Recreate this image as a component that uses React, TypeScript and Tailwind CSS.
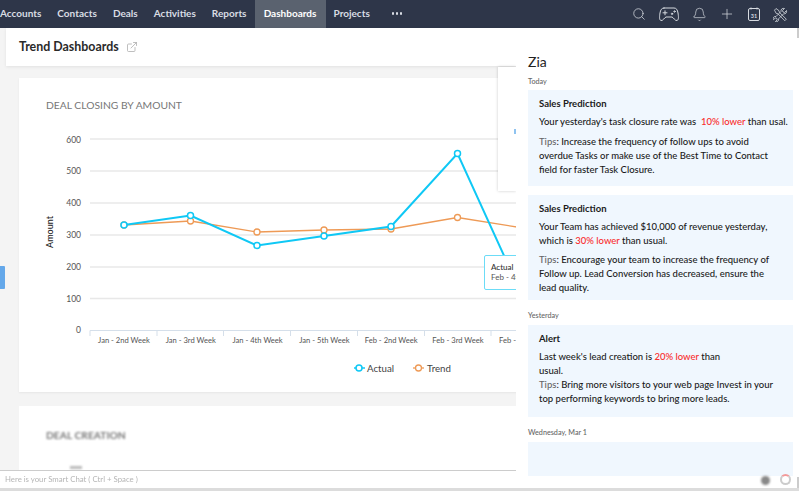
import React from "react";
import { Search, Bell, Plus, ExternalLink } from "lucide-react";

const nav = ["Accounts", "Contacts", "Deals", "Activities", "Reports", "Dashboards", "Projects"];
const xs = [124, 190.5, 257, 324, 391, 457.5];
const actual = [225, 215.5, 245.5, 236, 226.5, 153.5];
const trend = [225, 221, 232, 230, 229, 217.5];
const grid = [139, 171, 203, 235, 267, 298.5];
const labels = ["600", "500", "400", "300", "200", "100", "0"];
const ticks = ["Jan - 2nd Week", "Jan - 3rd Week", "Jan - 4th Week", "Jan - 5th Week", "Feb - 2nd Week", "Feb - 3rd Week", "Feb - 4th Week"];
const pts = (a: number[]) => a.map((y, i) => `${xs[i]},${y}`).join(" ");

function Chart() {
  return (
    <svg width="520" height="281" viewBox="0 111 520 281" className="block">
      {grid.map((y) => (
        <line key={y} x1="90" x2="520" y1={y} y2={y} stroke="#e8e8e8" strokeWidth="1.3" />
      ))}
      {labels.map((l, i) => (
        <text key={l} x="81" y={142.5 + i * 31.8} textAnchor="end" fontSize="8.5" fill="#555">{l}</text>
      ))}
      <text transform="translate(52.5,232) rotate(-90)" textAnchor="middle" fontSize="9" fontWeight="500" fill="#222">Amount</text>
      <line x1="90" x2="520" y1="330.5" y2="330.5" stroke="#d5dfea" />
      {[90, 157, 223.5, 290.5, 357.5, 424.5, 491].map((x) => (
        <line key={x} x1={x} x2={x} y1="330.5" y2="336" stroke="#d5dfea" />
      ))}
      {ticks.map((t, i) => (
        <text key={t} x={124 + i * 66.8} y="343" textAnchor="middle" fontSize="7.6" fill="#555">{t}</text>
      ))}
      <polyline points={pts(trend) + " 520,227.5"} fill="none" stroke="#ee9a56" strokeWidth="1.3" />
      {trend.map((y, i) => (
        <circle key={i} cx={xs[i]} cy={y} r="3" fill="#fff" stroke="#ee9a56" strokeWidth="1.3" />
      ))}
      <polyline points={pts(actual) + " 506,260"} fill="none" stroke="#0fc8f5" strokeWidth="2" />
      {actual.map((y, i) => (
        <circle key={i} cx={xs[i]} cy={y} r="3" fill="#fff" stroke="#0fc8f5" strokeWidth="1.5" />
      ))}
      <line x1="354" x2="365" y1="368" y2="368" stroke="#0fc8f5" strokeWidth="1.5" />
      <circle cx="359" cy="368" r="3" fill="#fff" stroke="#0fc8f5" strokeWidth="1.5" />
      <text x="367" y="371.5" fontSize="9.7" fill="#444">Actual</text>
      <line x1="413" x2="424" y1="368" y2="368" stroke="#ee9a56" strokeWidth="1.3" />
      <circle cx="418.5" cy="368" r="3" fill="#fff" stroke="#ee9a56" strokeWidth="1.3" />
      <text x="427" y="371.5" fontSize="9.7" fill="#444">Trend</text>
    </svg>
  );
}

function Red({ children }: { children: React.ReactNode }) {
  return <span className="text-[#f92c2c]">{children}</span>;
}
function Tips() {
  return <span className="text-[#666]">Tips</span>;
}
function Card({ title, className, children }: { title: string; className?: string; children: React.ReactNode }) {
  return (
    <div className={`bg-[#f0f7fe] pl-[11px] pt-[7px] whitespace-nowrap ${className ?? ""}`}>
      <div className="font-bold text-[#1c1c1c] h-[18px] leading-[14px]">{title}</div>
      {children}
    </div>
  );
}

export default function App() {
  return (
    <div className="relative w-[799px] h-[491px] overflow-hidden bg-[#f4f4f4] flex flex-col text-[#111]" style={{ fontFamily: '"Lato","Liberation Sans",sans-serif' }}>
      <header className="h-[28px] shrink-0 bg-[#2e3649] flex items-stretch text-[10px] font-bold text-[#d9dde4]">
        {nav.map((n, i) => (
          <div key={n} className={`flex items-center pb-[1px] ${i === 0 ? "pr-2" : "px-2"} ${n === "Dashboards" ? "w-[71px] justify-center bg-[#5a626f] text-white" : ""}`}>{n}</div>
        ))}
        <div className="flex items-center pl-[14px] gap-[1.5px] pb-[1px]">
          <span className="w-[2.5px] h-[2.5px] rounded-full bg-[#d9dde4]" />
          <span className="w-[2.5px] h-[2.5px] rounded-full bg-[#d9dde4]" />
          <span className="w-[2.5px] h-[2.5px] rounded-full bg-[#d9dde4]" />
        </div>
        <div className="ml-auto flex items-center gap-[12px] pr-[11px] text-[#d6dae0]">
          <Search size={14} strokeWidth={1.3} />
          <svg width="22" height="16" viewBox="0 0 22 16" fill="none" stroke="currentColor" strokeWidth="1" strokeLinejoin="round" strokeLinecap="round">
            <path d="M6 2h10c2.500 0 3.500 2 4 5s1 7-1 7.500c-2 .5-3.500-3-5-3.500H8c-1.500.5-3 4-5 3.500S1.500 10 2 7s1.500-5 4-5z" />
            <path d="M5 6.800h4M7 4.800v4" />
            <circle cx="14" cy="7.800" r=".7" />
            <circle cx="16.500" cy="5.500" r=".7" />
          </svg>
          <Bell size={15} strokeWidth={1.1} />
          <Plus size={16} strokeWidth={1.1} />
          <svg width="14" height="15" viewBox="0 0 14 15" fill="none" stroke="currentColor" strokeWidth="1">
            <rect x="1.500" y="1.500" width="11" height="12" rx="1.500" />
            <path d="M4 .5v2M10 .5v2" />
            <text x="7" y="10.500" textAnchor="middle" fontSize="5.500" fontWeight="700" fill="currentColor" stroke="none">31</text>
          </svg>
          <svg width="15" height="15" viewBox="0 0 15 15" fill="none" stroke="currentColor" strokeWidth="0.8" strokeLinejoin="round">
            <path d="M1.500 3.200 3 1.500l3 2.200.3 1.500 7 7-1.500 1.500-7-7-1.600-.3z" />
            <path d="M13.500 3.500l-2 2-1.500-.5-.5-1.500 2-2c-2-.7-4 .8-3.500 3L3 9.500c-2-.5-3.500 1.500-2.500 3.200l1.800-1.700 1.500.4.400 1.400-1.800 1.800c2 .7 3.700-1 3.200-2.800l5-5c2 .5 3.500-1.300 2.900-3.300z" />
          </svg>
        </div>
      </header>

      <div className="flex-1 min-h-0 pl-[6px] flex flex-col">
        <div className="h-[38px] shrink-0 bg-white flex items-center gap-[7px] pl-[13px] shadow-[0_1px_3px_rgba(0,0,0,0.08)]">
          <span className="text-[12.4px] font-bold text-[#2a2a2a]">Trend Dashboards</span>
          <ExternalLink size={12} strokeWidth={1.5} className="text-[#aaa]" />
        </div>
        <div className="flex-1 min-h-0 pl-[13px] pt-[12px] flex flex-col gap-[14px]">
          <div className="h-[314px] shrink-0 bg-white shadow-[0_1px_2px_rgba(0,0,0,0.06)] overflow-hidden">
            <div className="pl-[27px] pt-[21px] h-[33px] text-[10.3px] leading-[12px] text-[#777]">DEAL CLOSING BY AMOUNT</div>
            <div className="-ml-[19px]"><Chart /></div>
          </div>
          <div className="flex-1 bg-white pl-[27px] pt-[23px]">
            <div className="text-[10.3px] leading-[13px] font-bold text-[#777] blur-[1px]">DEAL CREATION</div>
            <div className="ml-[24px] mt-[24px] w-[12px] h-[3px] bg-[#bbb] blur-[1px]" />
          </div>
        </div>
      </div>

      <div className="absolute left-0 top-[266px] w-[5px] h-[23px] rounded-r-[1px] bg-[#64a8ea]" />

      <div className="absolute left-[498px] top-[67px] w-[18px] h-[124px] bg-white shadow-[0_0_3px_rgba(0,0,0,0.2)]">
        <div className="absolute right-0 top-[62px] w-[2px] h-[5px] bg-[#8fc3f0]" />
      </div>

      <div className="absolute left-[484px] top-[255px] w-[40px] h-[35px] bg-white border-[1.5px] border-[#6cdcf7] rounded-[2px] pl-[6px] pt-[6px] text-[8px] leading-[10px] text-[#333] whitespace-nowrap overflow-hidden">
        <div className="font-medium">Actual</div>
        <div className="text-[#555]">Feb - 4th Week</div>
      </div>

      <div className="absolute left-0 right-0 bottom-0 h-[21px] bg-[#dcdcdc] pb-[3px]">
        <div className="h-full bg-white border-t border-[#ccc] pl-[5px] flex items-center text-[7.8px] text-[#b5b5b5]">
          <span className="blur-[0.6px]">Here is your Smart Chat ( Ctrl + Space )</span>
        </div>
      </div>

      <aside className="absolute left-[516px] top-[28px] right-0 bottom-[3px] bg-white pl-[12px] pr-[6px] text-[9.5px] leading-[14px] font-medium text-[#1a1a1a]">
        <div className="text-[14px] leading-[20px] mt-[24px] font-normal text-[#222]">Zia</div>
        <div className="text-[7.2px] leading-[10px] mt-[5px] mb-[3px] text-[#666] font-medium">Today</div>
        <div className="flex flex-col">
          <Card title="Sales Prediction" className="h-[96px] mb-[9px]">
            <div>Your yesterday's task closure rate was&nbsp; <Red>10% lower</Red> than usal.</div>
            <div className="mt-[6px]"><Tips />: Increase the frequency of follow ups to avoid<br />overdue Tasks or make use of the Best Time to Contact<br />field for faster Task Closure.</div>
          </Card>
          <Card title="Sales Prediction" className="h-[105px]">
            <div>Your Team has achieved $10,000 of revenue yesterday,<br />which is <Red>30% lower</Red> than usual.</div>
            <div className="mt-[5px]"><Tips />: Encourage your team to increase the frequency of<br />Follow up. Lead Conversion has decreased, ensure the<br />lead quality.</div>
          </Card>
          <div className="text-[7.2px] leading-[10px] mt-[11px] mb-[4px] text-[#666] font-medium">Yesterday</div>
          <Card title="Alert" className="h-[92px]">
            <div>Last week's lead creation is <Red>20% lower</Red> than<br />usual.<br /><Tips />: Bring more visitors to your web page Invest in your<br />top performing keywords to bring more leads.</div>
          </Card>
          <div className="text-[7.2px] leading-[10px] mt-[11px] mb-[4px] text-[#666] font-medium">Wednesday, Mar 1</div>
          <div className="h-[34px] bg-[#f0f7fe]" />
        </div>
      </aside>

      <div className="absolute right-0 top-[28px] w-[2px] h-[10px] bg-[#ccc]" />
      <div className="absolute right-0 top-[477px] w-[2px] h-[11px] bg-[#ccc]" />
      <div className="absolute left-[761px] top-[476px] w-[9px] h-[9px] rounded-full bg-[#888] blur-[1px]" />
      <div className="absolute left-[780px] top-[474px] w-[11px] h-[11px] rounded-full border-[2px] border-[#ccc] border-t-[#f39a9a] blur-[0.7px]" />
    </div>
  );
}
